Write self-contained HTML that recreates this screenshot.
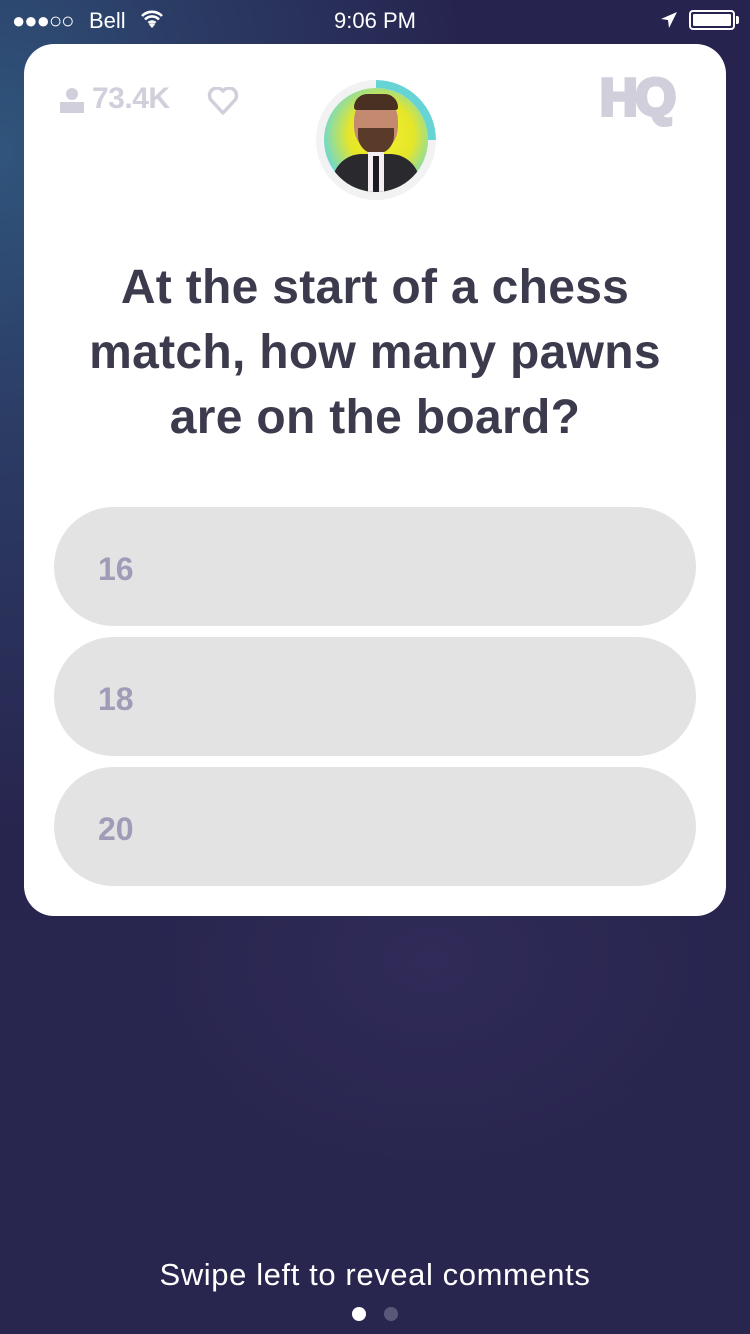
<!DOCTYPE html>
<html><head><meta charset="utf-8"><style>
*{margin:0;padding:0;box-sizing:border-box}
body{width:750px;height:1334px;overflow:hidden;font-family:"Liberation Sans",sans-serif;
background:radial-gradient(ellipse 300px 220px at 430px 960px,#302b58 0%,rgba(48,43,88,0) 100%),
radial-gradient(ellipse 480px 680px at 0px 150px,#30557c 0%,rgba(48,85,124,0.5) 40%,rgba(40,38,82,0) 100%),
linear-gradient(#26234e,#28264f);position:relative}
.sb{position:absolute;top:0;left:0;width:750px;height:40px;color:#fff;font-size:22px}
.card{position:absolute;left:24px;top:44px;width:702px;height:872px;background:#fff;border-radius:30px}
.q{position:absolute;left:0;top:255px;width:750px;text-align:center;font-weight:bold;font-size:48px;line-height:65px;color:#3c3b4e;letter-spacing:0.3px}
.a{position:absolute;left:54px;width:642px;height:119px;border-radius:60px;background:#e3e3e3;color:#9f9cb8;font-weight:bold;font-size:32px;padding-left:44px;line-height:124px}
</style></head><body>
<div class="sb">
<div style="position:absolute;left:12px;top:8px;font-size:22px;letter-spacing:-1px">●●●○○</div>
<div style="position:absolute;left:89px;top:8px">Bell</div>
<svg style="position:absolute;left:140px;top:9px" width="24" height="20" viewBox="0 0 24 20"><path d="M2 7a14 14 0 0 1 20 0M5 10.5a9.5 9.5 0 0 1 14 0M8.5 14a5 5 0 0 1 7 0" stroke="#fff" stroke-width="2.6" fill="none"/><path d="M12 19l-3-3.5a4 4 0 0 1 6 0z" fill="#fff"/></svg>
<div style="position:absolute;left:0;width:750px;text-align:center;top:8px">9:06 PM</div>
<svg style="position:absolute;left:660px;top:11px" width="18" height="18" viewBox="0 0 18 18"><path d="M17 1L1 8l7 1 1 8z" fill="#fff"/></svg>
<div style="position:absolute;left:689px;top:10px;width:46px;height:20px;border:2px solid #fff;border-radius:4px;padding:2px"><div style="background:#fff;width:100%;height:100%;border-radius:1px"></div></div>
<div style="position:absolute;left:736px;top:16px;width:3px;height:8px;background:#fff;border-radius:0 2px 2px 0"></div>
</div>
<div class="card"></div>
<svg style="position:absolute;left:59px;top:86px" width="26" height="28" viewBox="0 0 26 28"><circle cx="13" cy="8" r="6" fill="#d0cfdb"/><rect x="1" y="16" width="24" height="11" fill="#d0cfdb"/></svg>
<div style="position:absolute;left:92px;top:82px;font-weight:bold;font-size:30px;color:#d0cfdb;letter-spacing:-0.5px">73.4K</div>
<svg style="position:absolute;left:207px;top:87px" width="32" height="28" viewBox="0 0 32 28"><path d="M16 26L4 13a7 7 0 0 1 12-9 7 7 0 0 1 12 9z" stroke="#d0cfdb" stroke-width="3.5" fill="none" stroke-linejoin="round"/></svg>
<div style="position:absolute;left:600px;top:68px;font-weight:bold;font-size:52px;color:#d0cfdb;letter-spacing:-2px;-webkit-text-stroke:4px #d0cfdb">HQ</div>
<div style="position:absolute;left:316px;top:80px;width:120px;height:120px;border-radius:50%;background:#f2f2f2;overflow:hidden">
<div style="position:absolute;left:8px;top:8px;width:104px;height:104px;border-radius:50%;background:radial-gradient(circle at 55% 45%,#f0f030 0%,#e6e628 40%,#66d8d8 75%,#222 100%);overflow:hidden">
<div style="position:absolute;left:30px;top:8px;width:44px;height:55px;border-radius:45%;background:#c48a70"></div>
<div style="position:absolute;left:30px;top:6px;width:44px;height:16px;border-radius:20px 20px 4px 4px;background:#4a3022"></div>
<div style="position:absolute;left:34px;top:40px;width:36px;height:26px;border-radius:0 0 18px 18px;background:#5a3a28"></div>
<div style="position:absolute;left:8px;top:66px;width:88px;height:50px;border-radius:30px 30px 0 0;background:#2a2a2e"></div>
<div style="position:absolute;left:44px;top:64px;width:16px;height:40px;background:#f4eef2"></div>
<div style="position:absolute;left:49px;top:68px;width:6px;height:36px;background:#1a1a20"></div>
</div>
<svg style="position:absolute;left:0;top:0" width="120" height="120" viewBox="0 0 120 120"><path d="M60 4A56 56 0 0 1 116 60" stroke="#66d4d4" stroke-width="8" fill="none"/></svg>
</div>
<div class="q">At the start of a chess<br>match, how many pawns<br>are on the board?</div>
<div class="a" style="top:507px">16</div>
<div class="a" style="top:637px">18</div>
<div class="a" style="top:767px">20</div>
<div style="position:absolute;left:0;width:750px;top:1257px;text-align:center;color:#fff;font-size:31px;letter-spacing:0.6px">Swipe left to reveal comments</div>
<div style="position:absolute;left:352px;top:1307px;width:14px;height:14px;border-radius:50%;background:#fff"></div>
<div style="position:absolute;left:384px;top:1307px;width:14px;height:14px;border-radius:50%;background:#5a5878"></div>
</body></html>
